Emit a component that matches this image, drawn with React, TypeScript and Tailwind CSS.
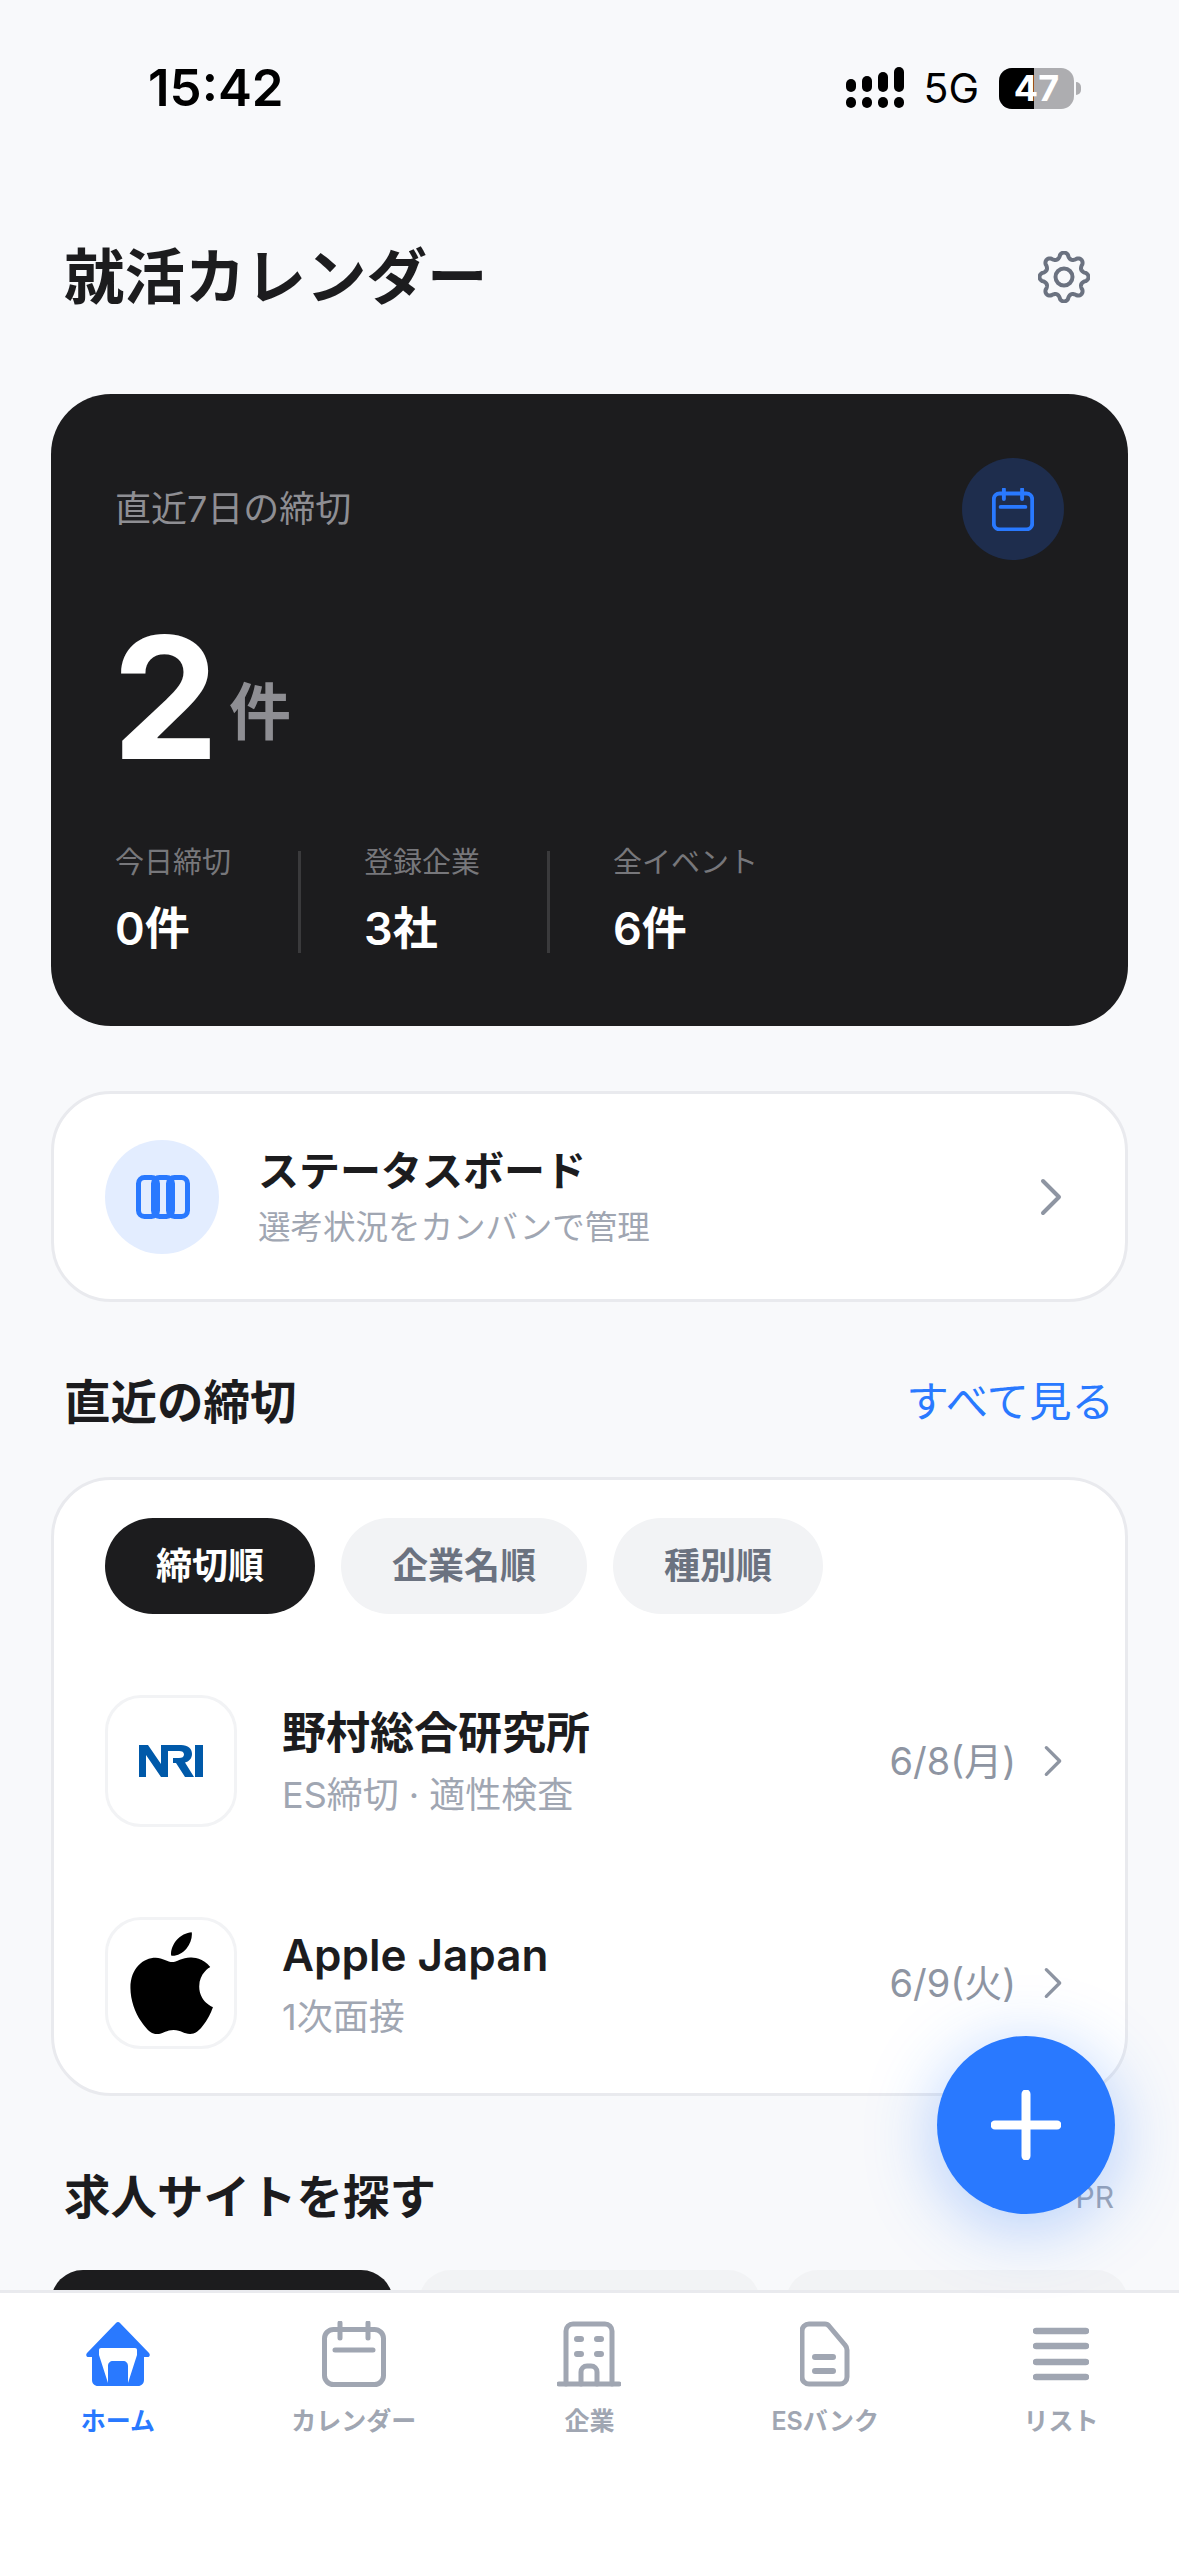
import React from "react";

const BLUE = "#2979ff";

function Chevron({ className }: { className: string }) {
  return (
    <svg viewBox="0 0 24 38" className={className} fill="none" stroke="#8e95a2" strokeWidth="4" strokeLinecap="round" strokeLinejoin="round">
      <path d="M4 3l16 16L4 35" />
    </svg>
  );
}

// Eight-lobed cog outline, sampled from a polar curve.
const cogPath = Array.from({ length: 240 }, (_, i) => {
  const t = (i / 240) * Math.PI * 2;
  const wave = Math.cos(8 * t);
  const r = 21.6 + 2.9 * Math.sign(wave) * Math.pow(Math.abs(wave), 0.7);
  const x = 26 + r * Math.sin(t);
  const y = 26 - r * Math.cos(t);
  return `${i === 0 ? "M" : "L"}${x.toFixed(2)} ${y.toFixed(2)}`;
}).join("") + "Z";

function Gear() {
  return (
    <svg viewBox="0 0 52 52" className="h-[52px] w-[52px]" fill="none" stroke="#6b7280" strokeWidth="4" strokeLinejoin="round">
      <path d={cogPath} />
      <circle cx="26" cy="26" r="8.500" />
    </svg>
  );
}

function SignalBars() {
  return (
    <svg viewBox="0 0 58 42" className="h-[42px] w-[58px]" fill="#000">
      <rect x="0" y="12" width="10" height="13" rx="5" />
      <rect x="16" y="9" width="10" height="16" rx="5" />
      <rect x="32" y="5" width="10" height="20" rx="5" />
      <rect x="48" y="0" width="10" height="25" rx="5" />
      <rect x="0" y="30" width="10" height="11" rx="5" />
      <rect x="16" y="30" width="10" height="11" rx="5" />
      <rect x="32" y="30" width="10" height="11" rx="5" />
      <rect x="48" y="30" width="10" height="11" rx="5" />
    </svg>
  );
}

function Battery() {
  return (
    <div className="flex items-center">
      <div className="relative flex h-[41px] w-[75px] items-center justify-center overflow-hidden rounded-[13px] bg-[#adadb0]">
        <div className="absolute inset-y-0 left-0 w-[35px] bg-black" />
        <span className="relative text-[36px] font-bold leading-none text-white">47</span>
      </div>
      <div className="ml-[2px] h-[13px] w-[5px] rounded-r-full bg-[#adadb0]" />
    </div>
  );
}

function BoardIcon() {
  return (
    <svg viewBox="0 0 54 44" className="ml-[2px] h-[44px] w-[54px]" fill="none" stroke={BLUE} strokeWidth="5" strokeLinejoin="round">
      <rect x="2.500" y="2.500" width="19" height="39" rx="6" />
      <rect x="17.500" y="2.500" width="19" height="39" rx="6" />
      <rect x="32.500" y="2.500" width="19" height="39" rx="6" />
    </svg>
  );
}

function NriLogo() {
  return (
    <svg viewBox="0 0 64 32" className="h-[32px] w-[64px]" fill="#0059a9">
      <path d="M0 0h9l13 19V0h7v32h-7L7 10v22H0z" />
      <path d="M24 0h18c7 0 11 3.500 11 9 0 4.500-3 7.500-7 8.500L55 32h-9l-9-14h-3v-5h6c3 0 5-1 5-3.500S43 6 40 6H28z" />
      <rect x="56" y="0" width="8" height="32" />
    </svg>
  );
}

function AppleLogo() {
  return (
    <svg viewBox="0 0 814 1000" className="h-[103px] w-[84px]" fill="#000">
      <path d="M788 341c-6 4-107 61-107 188 0 147 129 199 133 200-1 3-21 71-68 140-42 61-86 121-153 121s-84-39-161-39c-75 0-102 40-163 40s-104-56-153-125C59 785 13 660 13 541c0-191 124-292 246-292 65 0 119 43 160 43 39 0 100-45 174-45 28 0 129 2 195 94zM558 159c31-36 52-87 52-137 0-7-1-14-2-20-50 2-110 33-146 75-28 32-55 83-55 134 0 8 1 15 2 18 3 1 9 2 14 2 45 0 102-30 135-72z" />
    </svg>
  );
}

function HomeIcon() {
  return (
    <svg viewBox="0 0 64 64" className="h-[64px] w-[64px]">
      <path
        fill={BLUE}
        fillRule="evenodd"
        d="M32 0c.8 0 1.400.3 2 1l29 30c1.500 1.700.7 4-1.500 4H58v23c0 3.500-2.500 6-6 6H12c-3.500 0-6-2.500-6-6V35H2.500C.3 35-.5 32.700 1 31L30 1c.6-.7 1.200-1 2-1zM15 26c-1.200 0-2 .8-2 2v5l9 28V44c0-3 2-5 5-5h10c3 0 5 2 5 5v17l9-28v-5c0-1.200-.8-2-2-2z"
      />
    </svg>
  );
}

function CalendarIcon({ size, color, width }: { size: string; color: string; width: number }) {
  return (
    <svg viewBox="0 0 64 66" className={size} fill="none" stroke={color} strokeWidth={width} strokeLinecap="round" strokeLinejoin="round">
      <rect x="2.500" y="8.500" width="59" height="55" rx="9" />
      <path d="M18 2v15M46 2v15M13 29h38" />
    </svg>
  );
}

function BuildingIcon() {
  return (
    <svg viewBox="0 0 64 66" className="h-[66px] w-[64px]" fill="none" stroke="#a0a6b2" strokeWidth="5" strokeLinecap="round" strokeLinejoin="round">
      <path d="M9 63V10a7 7 0 0 1 7-7h32a7 7 0 0 1 7 7v53" />
      <path d="M2 63h60" />
      <path d="M24 63V51a6 6 0 0 1 6-6h4a6 6 0 0 1 6 6v12" />
      <path d="M20 18h4M40 18h4M20 33h4M40 33h4" strokeWidth="6" />
    </svg>
  );
}

function DocIcon() {
  return (
    <svg viewBox="0 0 50 66" className="h-[66px] w-[50px]" fill="none" stroke="#a0a6b2" strokeWidth="5" strokeLinecap="round" strokeLinejoin="round">
      <path d="M9 3h16c2 0 3 .6 4 2l16 19c1.500 1.600 2 3 2 5v27a7 7 0 0 1-7 7H9a7 7 0 0 1-7-7V10a7 7 0 0 1 7-7z" />
      <path d="M15 36h18M15 50h18" strokeWidth="6" />
    </svg>
  );
}

function ListIcon() {
  return (
    <svg viewBox="0 0 56 54" className="h-[54px] w-[56px]" fill="none" stroke="#a0a6b2" strokeWidth="6.500" strokeLinecap="round">
      <path d="M3 4h50M3 19h50M3 35h50M3 50h50" />
    </svg>
  );
}

function Stat({ label, value }: { label: string; value: string }) {
  return (
    <div className="flex w-[183px] flex-col">
      <span className="text-[29px] leading-[40px] text-[#77777b]">{label}</span>
      <span className="mt-[15px] text-[45px] font-semibold leading-[62px] text-white">{value}</span>
    </div>
  );
}

function Chip({ label, active }: { label: string; active?: boolean }) {
  return (
    <div className={active ? "flex h-[96px] items-center rounded-full bg-[#1c1c1e] px-[51px] text-[36px] font-semibold text-white" : "flex h-[96px] items-center rounded-full bg-[#f2f3f5] px-[51px] text-[36px] font-semibold text-[#6b7280]"}>
      {label}
    </div>
  );
}

function DeadlineRow({ logo, name, sub, date }: { logo: React.ReactNode; name: string; sub: string; date: string }) {
  return (
    <div className="flex h-[136px] items-center">
      <div className="flex h-[132px] w-[132px] items-center justify-center rounded-[36px] border-[3px] border-[#f2f3f5] bg-white">{logo}</div>
      <div className="ml-[45px] flex flex-col pt-[6px]">
        <span className="text-[44px] font-semibold leading-[60px] text-[#1c1c1e]">{name}</span>
        <span className="mt-[2px] text-[36px] leading-[60px] text-[#a0a6b2]">{sub}</span>
      </div>
      <span className="ml-auto text-[38px] text-[#8e95a2]">{date}</span>
      <Chevron className="ml-[27px] mr-[11px] h-[32px] w-[20px]" />
    </div>
  );
}

function Tab({ icon, label, active }: { icon: React.ReactNode; label: string; active?: boolean }) {
  return (
    <div className="flex w-[236px] flex-col items-center">
      <div className="flex h-[70px] items-center justify-center">{icon}</div>
      <span className={active ? "mt-[14px] text-[25px] font-semibold leading-[36px] text-[#2979ff]" : "mt-[14px] text-[25px] font-semibold leading-[36px] text-[#a0a6b2]"}>{label}</span>
    </div>
  );
}

export default function App() {
  return (
    <div className="relative flex h-[2556px] w-[1179px] flex-col overflow-hidden bg-[#f8f9fb] font-['Inter','Noto_Sans_CJK_JP',sans-serif] text-[#1c1c1e]">
      <div className="flex-1 overflow-hidden">
        {/* Status bar */}
        <div className="flex h-[174px] items-start justify-between pl-[148px] pr-[98px] pt-[60px]">
          <span className="text-[51px] font-semibold leading-[56px] text-black">15:42</span>
          <div className="flex items-center pt-[6px]">
            <SignalBars />
            <span className="ml-[19px] text-[41px] font-normal leading-[44px] text-black">5G</span>
            <div className="ml-[20px]">
              <Battery />
            </div>
          </div>
        </div>

        {/* Header */}
        <div className="flex h-[220px] items-start justify-between pl-[64px] pr-[89px] pt-[68px]">
          <h1 className="text-[60.500px] font-bold leading-[70px]">就活カレンダー</h1>
          <div className="pt-[9px]">
            <Gear />
          </div>
        </div>

        <div className="flex flex-col px-[51px]">
          {/* Deadline summary */}
          <section className="h-[632px] rounded-[60px] bg-[#1c1c1e] px-[64px] pt-[64px]">
            <div className="flex items-start justify-between">
              <span className="mt-[26px] text-[36px] leading-[50px] text-[#8e8e93]">直近7日の締切</span>
              <div className="flex h-[102px] w-[102px] items-center justify-center rounded-full bg-[#1e2d4d]">
                <CalendarIcon size="h-[43px] w-[42px]" color={BLUE} width={6} />
              </div>
            </div>
            <div className="mt-[72px] flex h-[150px] items-end">
              <span className="ml-[-3px] text-[170px] font-bold leading-[170px] text-white">2</span>
              <span className="mb-[33px] ml-[10px] text-[62px] font-semibold leading-[72px] text-[#8e8e93]">件</span>
            </div>
            <div className="mt-[61px] flex items-center">
              <Stat label="今日締切" value="0件" />
              <div className="mr-[63px] h-[102px] w-[3px] bg-[#3a3a3c]" />
              <Stat label="登録企業" value="3社" />
              <div className="mr-[63px] h-[102px] w-[3px] bg-[#3a3a3c]" />
              <Stat label="全イベント" value="6件" />
            </div>
          </section>

          {/* Status board link */}
          <section className="mt-[65px] flex h-[211px] items-center rounded-[60px] border-[3px] border-[#e9eaee] bg-white pl-[51px] pr-[62px]">
            <div className="flex h-[114px] w-[114px] items-center justify-center rounded-full bg-[#e3edff]">
              <BoardIcon />
            </div>
            <div className="ml-[39px] flex flex-col">
              <span className="text-[41px] font-semibold leading-[56px]">ステータスボード</span>
              <span className="mt-[6px] text-[32.500px] leading-[46px] text-[#a0a6b2]">選考状況をカンバンで管理</span>
            </div>
            <Chevron className="ml-auto h-[38px] w-[24px]" />
          </section>

          {/* Upcoming deadlines */}
          <div className="mt-[64px] flex h-[72px] items-center justify-between pl-[13px] pr-[14px]">
            <h2 className="text-[46.500px] font-bold leading-[60px]">直近の締切</h2>
            <span className="text-[42.500px] leading-[56px] text-[#2979ff]">すべて見る</span>
          </div>
          <section className="mt-[39px] h-[619px] rounded-[60px] border-[3px] border-[#e9eaee] bg-white px-[51px] pt-[38px]">
            <div className="flex gap-[26px]">
              <Chip label="締切順" active />
              <Chip label="企業名順" />
              <Chip label="種別順" />
            </div>
            <div className="mt-[79px] flex flex-col gap-[86px]">
              <DeadlineRow logo={<NriLogo />} name="野村総合研究所" sub="ES締切 · 適性検査" date="6/8(月)" />
              <DeadlineRow logo={<AppleLogo />} name="Apple Japan" sub="1次面接" date="6/9(火)" />
            </div>
          </section>

          {/* Job sites */}
          <div className="mt-[65px] flex h-[72px] items-center justify-between pl-[13px] pr-[14px]">
            <h2 className="text-[46.500px] font-bold leading-[60px]">求人サイトを探す</h2>
            <span className="text-[30px] leading-[40px] text-[#a0a6b2]">PR</span>
          </div>
          <div className="mt-[37px] flex gap-[26px]">
            <div className="h-[120px] flex-1 rounded-[32px] bg-[#1c1c1e]" />
            <div className="h-[120px] flex-1 rounded-[32px] bg-[#f2f3f5]" />
            <div className="h-[120px] flex-1 rounded-[32px] bg-[#f2f3f5]" />
          </div>
        </div>
      </div>

      {/* Add button */}
      <button className="absolute left-[937px] top-[2036px] flex h-[178px] w-[178px] items-center justify-center rounded-full bg-[#2979ff] shadow-[0_12px_70px_rgba(41,121,255,0.35)]">
        <svg viewBox="0 0 70 70" className="h-[70px] w-[70px]" fill="none" stroke="#fff" strokeWidth="9" strokeLinecap="round">
          <path d="M35 4v62M4 35h62" />
        </svg>
      </button>

      {/* Tab bar */}
      <nav className="flex h-[266px] border-t-[3px] border-[#e9eaee] bg-white pt-[26px]">
        <Tab active icon={<HomeIcon />} label="ホーム" />
        <Tab icon={<CalendarIcon size="h-[66px] w-[64px]" color="#a0a6b2" width={5} />} label="カレンダー" />
        <Tab icon={<BuildingIcon />} label="企業" />
        <Tab icon={<DocIcon />} label="ESバンク" />
        <Tab icon={<ListIcon />} label="リスト" />
      </nav>
    </div>
  );
}
